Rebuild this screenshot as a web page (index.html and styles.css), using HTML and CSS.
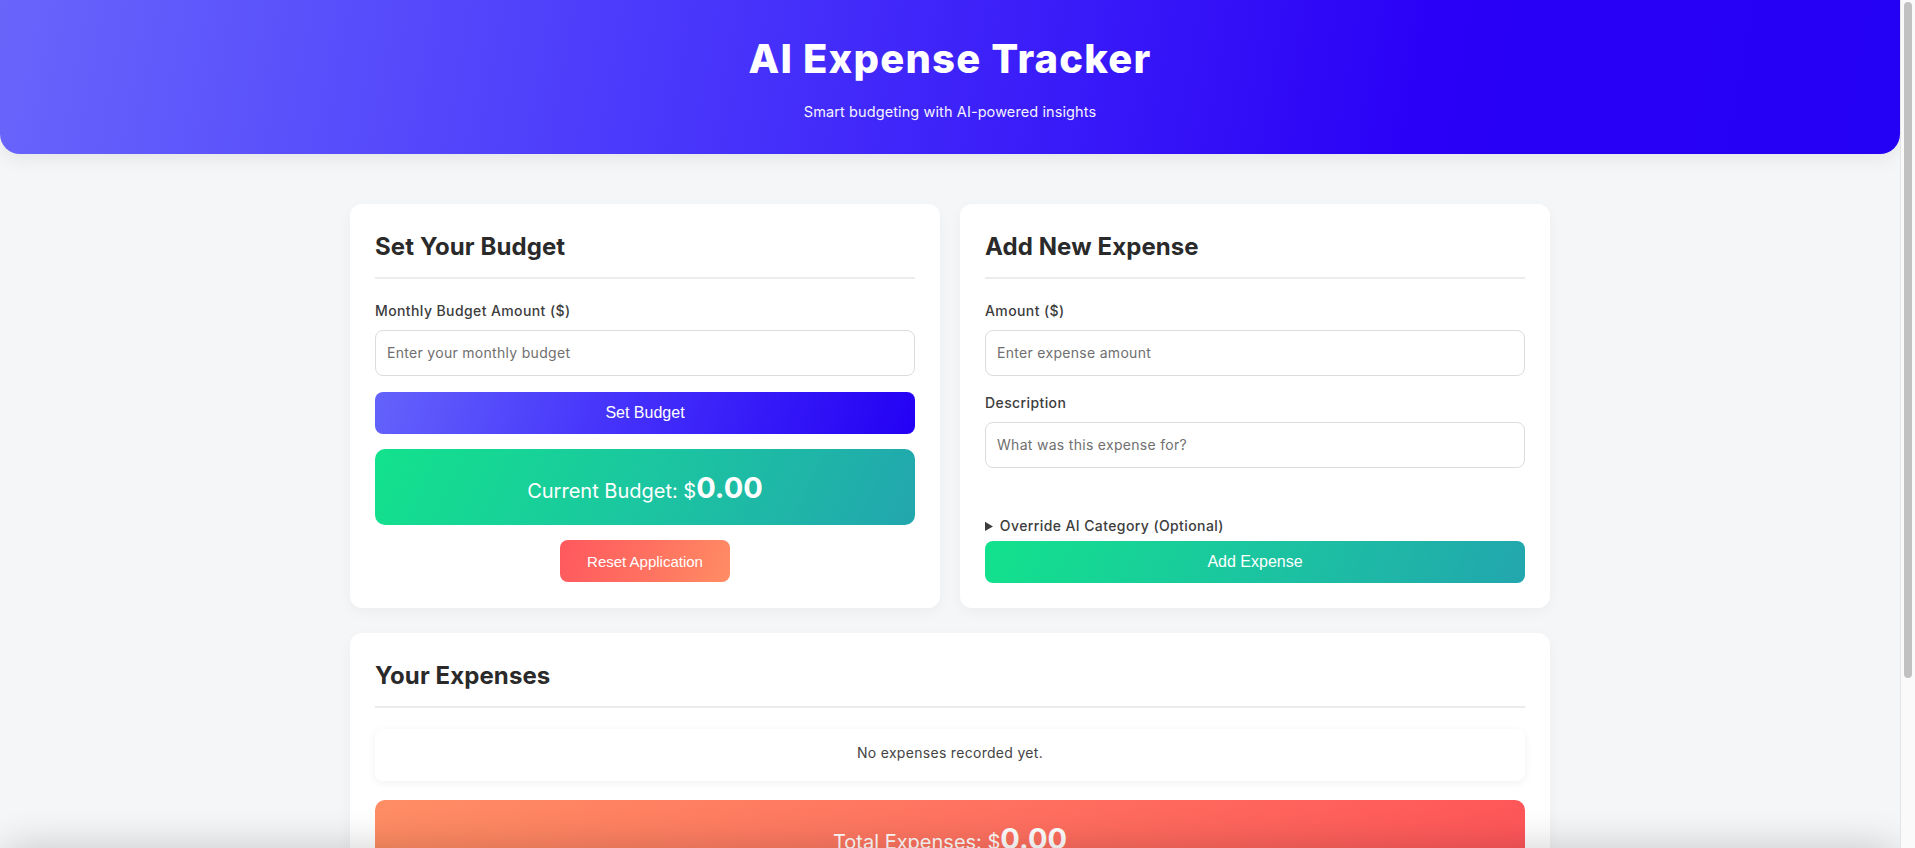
FILE: index.html
```html
<!DOCTYPE html>
<html lang="en">
<head>
<meta charset="utf-8">
<title>AI Expense Tracker</title>
<link rel="stylesheet" href="styles.css">
</head>
<body>
<div class="page">
  <header class="app-header">
    <h1 class="app-title">AI Expense Tracker</h1>
    <p class="app-subtitle">Smart budgeting with AI-powered insights</p>
  </header>

  <main class="container">
    <div class="grid">
      <section class="card">
        <h2 class="card-title">Set Your Budget</h2>
        <div class="form-group">
          <label class="label" for="budget">Monthly Budget Amount ($)</label>
          <input class="input" id="budget" type="text" placeholder="Enter your monthly budget">
        </div>
        <button class="btn btn-primary">Set Budget</button>
        <div class="stat stat-green">
          <p class="stat-text"><span class="stat-label">Current Budget: $</span><span class="stat-value">0.00</span></p>
        </div>
        <div class="center">
          <button class="btn btn-reset">Reset Application</button>
        </div>
      </section>

      <section class="card">
        <h2 class="card-title">Add New Expense</h2>
        <div class="form-group">
          <label class="label" for="amount">Amount ($)</label>
          <input class="input" id="amount" type="text" placeholder="Enter expense amount">
        </div>
        <div class="form-group">
          <label class="label" for="desc">Description</label>
          <input class="input" id="desc" type="text" placeholder="What was this expense for?">
        </div>
        <details class="override">
          <summary>Override AI Category (Optional)</summary>
        </details>
        <button class="btn btn-green">Add Expense</button>
      </section>
    </div>

    <section class="card expenses">
      <h2 class="card-title">Your Expenses</h2>
      <div class="empty">No expenses recorded yet.</div>
      <div class="stat stat-red">
        <p class="stat-text"><span class="stat-label">Total Expenses: $</span><span class="stat-value">0.00</span></p>
      </div>
    </section>
  </main>
</div>
<div class="bottom-shade"></div>
<div class="scrollbar"><div class="scrollbar-thumb"></div></div>
</body>
</html>
```

FILE: styles.css
```css
* { box-sizing: border-box; }

html, body {
  margin: 0;
  padding: 0;
}

body {
  background: #f5f6f8;
  font-family: Inter, "Noto Sans", sans-serif;
  color: #333;
}

.page {
  margin-right: 15px;
  min-height: 1000px;
}

.app-header {
  background: linear-gradient(100deg, #6865fb 0%, #4a38fb 35%, #2a00f6 75%, #2400f4 100%);
  color: #fff;
  text-align: center;
  padding: 35px 20px 31px;
  border-radius: 0 0 20px 20px;
  box-shadow: 0 4px 20px rgba(0, 0, 0, 0.08);
}

.app-title {
  margin: 0;
  font-size: 40px;
  line-height: 48px;
  font-weight: 800;
  letter-spacing: 1.2px;
}

.app-subtitle {
  margin: 18px 0 0;
  font-size: 14.5px;
  line-height: 22px;
  letter-spacing: 0.1px;
  opacity: 0.95;
}

.container {
  max-width: 1200px;
  margin: 50px auto 0;
}

.grid {
  display: grid;
  grid-template-columns: 1fr 1fr;
  gap: 20px;
  margin-bottom: 25px;
}

.card {
  background: #fff;
  border-radius: 12px;
  padding: 25px;
  box-shadow: 0 4px 14px rgba(0, 0, 0, 0.04);
  display: flex;
  flex-direction: column;
}

.card-title {
  margin: 0 0 21px;
  padding-bottom: 12px;
  border-bottom: 2px solid #ececec;
  font-size: 24px;
  line-height: 36px;
  font-weight: 700;
  letter-spacing: 0.1px;
  color: #2a2a2a;
}

.form-group {
  display: flex;
  flex-direction: column;
  margin-bottom: 16px;
}

.label {
  font-size: 14px;
  line-height: 21px;
  font-weight: 500;
  letter-spacing: 0.4px;
  color: #3d3d3d;
  margin-bottom: 9px;
}

.input {
  height: 46px;
  padding: 0 11px 1px;
  border: 1px solid #dcdcdc;
  border-radius: 8px;
  font-family: inherit;
  font-size: 14px;
  letter-spacing: 0.3px;
  color: #333;
  background: #fff;
}

.input::placeholder {
  color: #6f6f6f;
}

.btn {
  border: none;
  color: #fff;
  font-family: "Liberation Sans", Arial, sans-serif;
  font-size: 16px;
  height: 42px;
  border-radius: 8px;
  cursor: pointer;
}

.btn-primary {
  background: linear-gradient(110deg, #6463fb 0%, #4532fb 45%, #2400f4 100%);
}

.btn-green {
  background: linear-gradient(110deg, #12e28c 0%, #1bc5a0 50%, #22a6ae 100%);
  margin-top: 5px;
}

.btn-reset {
  background: linear-gradient(110deg, #ff585e 0%, #ff7060 50%, #ff8d64 100%);
  font-size: 15px;
  padding: 0 27px;
}

.stat {
  margin-top: 15px;
  height: 76px;
  border-radius: 10px;
  color: #fff;
  display: flex;
  align-items: center;
  justify-content: center;
}

.stat-text {
  margin: 0;
  padding-top: 1px;
}

.stat-green {
  background: linear-gradient(115deg, #12e28c 0%, #1bc6a0 50%, #22a6ae 100%);
}

.stat-red {
  background: linear-gradient(105deg, #ff8d64 0%, #ff7360 50%, #ff5659 100%);
  margin-top: 19px;
}

.stat-label {
  font-size: 20px;
}

.stat-value {
  font-size: 29px;
  font-weight: 700;
}

.center {
  display: flex;
  justify-content: center;
  margin-top: 15px;
}

.override {
  margin-top: 31px;
}

.override summary {
  font-size: 14px;
  line-height: 21px;
  font-weight: 500;
  letter-spacing: 0.4px;
  color: #3d3d3d;
  cursor: pointer;
}

.empty {
  background: #fff;
  border-radius: 8px;
  box-shadow: 0 2px 8px rgba(0, 0, 0, 0.06);
  padding: 13px 15px 17px;
  text-align: center;
  font-size: 14px;
  line-height: 22px;
  letter-spacing: 0.3px;
  color: #444;
}

.bottom-shade {
  position: fixed;
  left: 0;
  right: 15px;
  bottom: -40px;
  height: 40px;
  border-radius: 30px;
  box-shadow: 0 0 40px rgba(0, 0, 0, 0.2);
  z-index: 10;
}

.scrollbar {
  position: fixed;
  top: 0;
  right: 0;
  bottom: 0;
  width: 15px;
  background: #fafafa;
  border-left: 1px solid #e4e4e4;
  z-index: 20;
}

.scrollbar-thumb {
  margin: 2px 0 0 3px;
  width: 8px;
  height: 676px;
  border-radius: 4px;
  background: #c1c1c1;
}
```
